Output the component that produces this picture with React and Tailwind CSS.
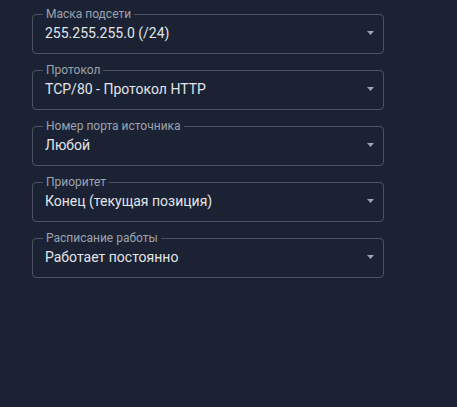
import React from 'react';

const fields = [
  { label: 'Маска подсети', value: '255.255.255.0 (/24)' },
  { label: 'Протокол', value: 'TCP/80 - Протокол HTTP' },
  { label: 'Номер порта источника', value: 'Любой' },
  { label: 'Приоритет', value: 'Конец (текущая позиция)' },
  { label: 'Расписание работы', value: 'Работает постоянно' },
];

const SelectField = ({ label, value }) => (
  <fieldset className="w-[352px] border border-[#4b5262] rounded-[4px]">
    <legend className="ml-[10px] px-[3px] text-[12px] leading-[14px] text-[#9ca3af]">{label}</legend>
    <div className="h-[32px] pb-[8px] pl-[12px] pr-[9px] flex items-center justify-between">
      <span className="text-[14px] leading-5 text-[#e2e5ea]">{value}</span>
      <svg width="7" height="4" viewBox="0 0 7 4">
        <polygon points="0,0 7,0 3.5,4" fill="#9ca3af" />
      </svg>
    </div>
  </fieldset>
);

export default function App() {
  return (
    <div
      className="min-h-screen bg-[#1b2233] pl-[32px] pt-[7px] flex flex-col gap-[9px]"
      style={{ fontFamily: 'Roboto, "Liberation Sans", sans-serif' }}
    >
      {fields.map(f => (
        <SelectField key={f.label} label={f.label} value={f.value} />
      ))}
    </div>
  );
}
